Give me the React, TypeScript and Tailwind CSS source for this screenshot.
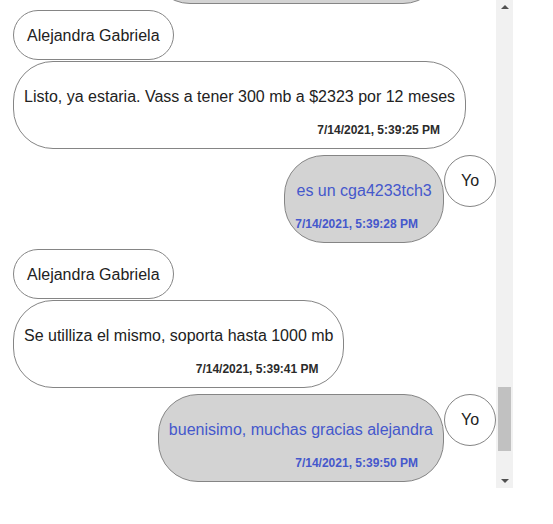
import React from 'react';

type Msg =
  | { from: 'other'; name: string; text: string; time: string }
  | { from: 'me'; text: string; time: string };

const messages: Msg[] = [
  {
    from: 'other',
    name: 'Alejandra Gabriela',
    text: 'Listo, ya estaria. Vass a tener 300 mb a $2323 por 12 meses',
    time: '7/14/2021, 5:39:25 PM',
  },
  { from: 'me', text: 'es un cga4233tch3', time: '7/14/2021, 5:39:28 PM' },
  {
    from: 'other',
    name: 'Alejandra Gabriela',
    text: 'Se utilliza el mismo, soporta hasta 1000 mb',
    time: '7/14/2021, 5:39:41 PM',
  },
  { from: 'me', text: 'buenisimo, muchas gracias alejandra', time: '7/14/2021, 5:39:50 PM' },
];

function Bubble({ text, time, mine }: { text: string; time: string; mine: boolean }) {
  return (
    <div
      className={`w-fit rounded-[40px] border border-[#858585] px-[10px] pt-[26px] pb-[11px] ${
        mine ? 'bg-[#d3d3d3] text-[#4558cc]' : 'bg-white text-[#222]'
      }`}
    >
      <p className="text-center text-[16px] leading-[18px] whitespace-nowrap">{text}</p>
      <p
        className={`mt-[17px] mr-[15px] text-right text-[12px] leading-[14px] font-bold whitespace-nowrap ${
          mine ? 'text-[#4558cc]' : 'text-[#2b2b2b]'
        }`}
      >
        {time}
      </p>
    </div>
  );
}

function Scrollbar() {
  return (
    <div className="w-[17px] h-full bg-[#f1f1f1] flex flex-col items-center">
      <div className="h-[14px] flex items-center justify-center">
        <div className="w-0 h-0 border-l-[4px] border-r-[4px] border-b-[4px] border-l-transparent border-r-transparent border-b-[#505050]" />
      </div>
      <div className="flex-1 w-full px-[2px] flex flex-col">
        <div className="h-[373px]" />
        <div className="h-[64px] w-full bg-[#c1c1c1]" />
      </div>
      <div className="h-[14px] flex items-center justify-center">
        <div className="w-0 h-0 border-l-[4px] border-r-[4px] border-t-[4px] border-l-transparent border-r-transparent border-t-[#505050]" />
      </div>
    </div>
  );
}

export default function App() {
  return (
    <div
      className="w-[513px] h-[488px] flex bg-white"
      style={{ fontFamily: '"Liberation Sans", Arial, sans-serif' }}
    >
      <div className="flex-1 overflow-hidden">
        <div className="-mt-[84px] pl-[13px] flex flex-col gap-[6px]">
          {/* earlier message, scrolled out of view: only its bottom edge shows */}
          <div className="flex justify-end">
            <div className="w-[293px] h-[88px] mr-[53px] rounded-[40px] border border-[#858585] bg-[#d3d3d3]" />
          </div>
          {messages.map((m, i) =>
            m.from === 'other' ? (
              <div key={i} className="flex flex-col items-start gap-px">
                <div className="rounded-full border border-[#858585] px-[13px] pt-[16px] pb-[14px] text-[16px] leading-[18px] text-[#222] whitespace-nowrap">
                  {m.name}
                </div>
                <Bubble text={m.text} time={m.time} mine={false} />
              </div>
            ) : (
              <div key={i} className="flex justify-end items-start">
                <Bubble text={m.text} time={m.time} mine={true} />
                <div className="w-[52px] h-[52px] shrink-0 rounded-full border border-[#858585] flex items-center justify-center text-[16px] text-[#222]">
                  Yo
                </div>
              </div>
            )
          )}
        </div>
      </div>
      <Scrollbar />
    </div>
  );
}
